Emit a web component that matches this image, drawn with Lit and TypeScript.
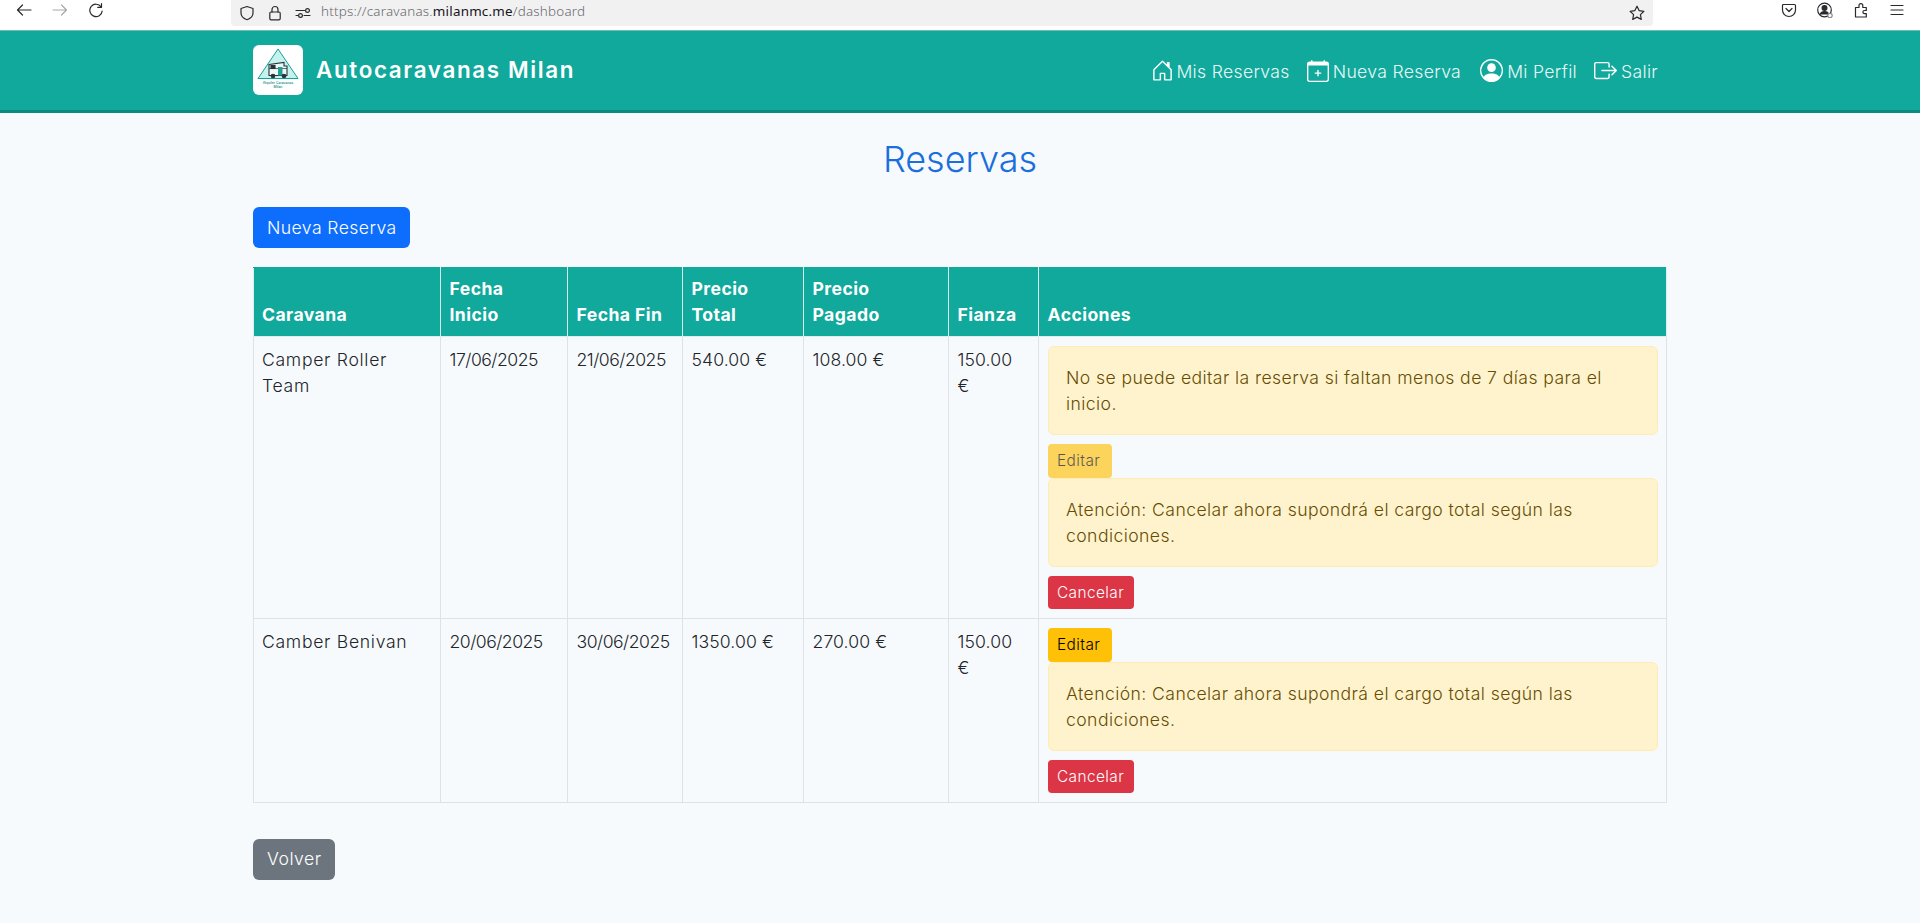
import { LitElement, html, css, svg } from 'lit';
import { customElement } from 'lit/decorators.js';

interface Reserva {
  caravana: string;
  inicio: string;
  fin: string;
  total: string;
  pagado: string;
  fianza: string;
  editable: boolean;
}

const RESERVAS: Reserva[] = [
  { caravana: 'Camper Roller\nTeam', inicio: '17/06/2025', fin: '21/06/2025', total: '540.00 €', pagado: '108.00 €', fianza: '150.00\n€', editable: false },
  { caravana: 'Camber Benivan', inicio: '20/06/2025', fin: '30/06/2025', total: '1350.00 €', pagado: '270.00 €', fianza: '150.00\n€', editable: true },
];

const COLS = [187, 127, 115, 121, 145, 90, 628];
const HEADERS = ['Caravana', 'Fecha\nInicio', 'Fecha Fin', 'Precio\nTotal', 'Precio\nPagado', 'Fianza', 'Acciones'];

const chromeIcon = (d: unknown, w = 16) => html`
  <svg class="ci" width=${w} height=${w} viewBox="0 0 16 16" fill="none" stroke="#2a2a2e" stroke-width="1.2" stroke-linecap="round" stroke-linejoin="round">${d}</svg>
`;

@customElement('app-root')
export class AppRoot extends LitElement {
  static styles = css`
    :host {
      display: block;
      height: 923px;
      overflow: hidden;
      background: #f7fafd;
      font-family: Inter, "Liberation Sans", sans-serif;
      font-size: 17.6px;
      line-height: 26.4px;
      letter-spacing: 0.42px;
      color: #212529;
      font-weight: 350;
    }
    .chrome {
      height: 31px;
      background: #fff;
      border-bottom: 1px solid #6fbdb6;
      box-sizing: border-box;
      display: flex;
      align-items: flex-start;
      letter-spacing: 0;
    }
    .nav-btns {
      width: 231px;
      display: flex;
      gap: 20px;
      padding: 2px 0 0 16px;
      box-sizing: border-box;
    }
    .ci { display: block; }
    .urlbar {
      width: 1422px;
      height: 26px;
      background: #f1f1f1;
      border-radius: 0 0 4px 4px;
      display: flex;
      align-items: center;
      gap: 12px;
      padding: 0 8px;
      box-sizing: border-box;
      font-family: "Noto Sans", sans-serif;
      font-size: 13.4px;
      letter-spacing: 0.22px;
      color: #6a6a70;
    }
    .urlbar b { font-weight: 400; color: #15141a; }
    .url { flex: 1; margin-left: -2px; margin-top: -3px; }
    .right-btns {
      display: flex;
      gap: 20px;
      padding: 2px 0 0 128px;
    }
    header {
      height: 82px;
      background: #10a99c;
      border-bottom: 3px solid #0c8a80;
      box-sizing: border-box;
    }
    .bar {
      width: 1414px;
      margin: 0 auto;
      height: 79px;
      display: flex;
      align-items: center;
    }
    .logo {
      width: 50px;
      height: 50px;
      background: #fff;
      border-radius: 6px;
      flex: none;
      display: block;
      margin-top: -1px;
    }
    .brand {
      margin-left: 13px;
      color: #fff;
      font-size: 22.4px;
      font-weight: 600;
      letter-spacing: 1.65px;
    }
    nav {
      margin-left: auto;
      display: flex;
      gap: 17px;
      margin-right: 9px;
      margin-top: 3px;
      font-weight: 300;
      letter-spacing: 0.33px;
    }
    nav a {
      display: flex;
      align-items: center;
      gap: 4px;
      color: #e9f8f6;
    }
    nav a:first-child { gap: 2px; }
    nav a:nth-child(3) { margin-left: 2px; }
    nav svg { display: block; margin-top: -3px; }
    main {
      width: 1414px;
      margin: 0 auto;
    }
    h1 {
      margin: 0;
      padding-top: 23px;
      height: 71px;
      font-size: 36px;
      line-height: 46px;
      font-weight: 300;
      letter-spacing: 0;
      color: #1a6fdc;
      text-align: center;
    }
    .btn {
      display: block;
      box-sizing: border-box;
      border-radius: 6px;
      height: 41px;
      padding: 7.5px 14px;
      color: #fff;
      font-weight: 300;
      white-space: nowrap;
    }
    .primary { background: #0d6efd; width: 157px; }
    .secondary { background: #6c757d; width: 82px; letter-spacing: 0.5px; padding-top: 7px; }
    .top-action { height: 60px; }
    .bottom { margin-top: 36px; }
    table {
      border-collapse: collapse;
      table-layout: fixed;
      width: 1413px;
    }
    th, td {
      border: 1px solid #dee2e6;
      padding: 10px 8px 8px 8.5px;
      vertical-align: top;
      text-align: left;
      font-weight: 350;
      white-space: pre-line;
    }
    th {
      padding: 8px 8px 7px 8.5px;
      vertical-align: bottom;
      background: #10a99c;
      color: #fff;
      font-weight: 700;
      border-color: #d9f0ee;
      border-top-color: #10a99c;
    }
    th:first-child, td:first-child { padding-left: 8px; }
    td.name { letter-spacing: 0.7px; }
    td.date { letter-spacing: -0.5px; }
    td.money { letter-spacing: 0.1px; }
    td.actions { padding: 9px 8px 9px 9px; white-space: normal; }
    .alert {
      box-sizing: border-box;
      height: 89px;
      padding: 18px 17px 14px;
      background: #fff3cd;
      border: 1px solid #ffecb5;
      border-radius: 6px;
      color: #664d03;
      font-weight: 300;
    }
    .alert.gap { margin-bottom: 9px; }
    .sm {
      box-sizing: border-box;
      padding: 4px 9px;
      border-radius: 4px;
      font-size: 15.4px;
      line-height: 25px;
    }
    .editar { background: #ffc107; color: #000; width: 64px; height: 34px; }
    .editar.off { opacity: 0.65; }
    .cancelar { background: #dc3545; color: #fff; width: 86px; height: 33px; font-weight: 300; margin-top: 9px; }
    .caption {
      font-size: 3.4px;
      font-weight: 500;
      letter-spacing: 0;
      fill: #0c8a80;
    }
  `;

  private logo() {
    return html`
      <svg class="logo" viewBox="0 0 50 50">
        <path d="M25 4 L45 33.500 H5 Z" fill="#c6f2ee" stroke="#12a296" stroke-width="1"></path>
        <g fill="none" stroke="#26343a" stroke-width="1.100">
          <path d="M16 19.500 L31 17.500 V21 H34 V30.500 H16 Z" fill="#eef7f6"></path>
          <path d="M16 23.500 H34" stroke-width="0.700"></path>
          <rect x="18" y="20.500" width="4" height="3" fill="#26343a"></rect>
          <rect x="25" y="22" width="4.500" height="8.500" fill="#1fa193" stroke="none"></rect>
          <circle cx="20" cy="31" r="1.800" fill="#26343a"></circle>
          <circle cx="31" cy="31" r="1.800" fill="#26343a"></circle>
        </g>
        <text class="caption" x="25" y="39" text-anchor="middle">Alquiler Caravanas</text>
        <text class="caption" x="25" y="43" text-anchor="middle">Milan</text>
      </svg>
    `;
  }

  private chrome() {
    return html`
      <div class="chrome">
        <div class="nav-btns">
          ${chromeIcon(svg`<path d="M15 8H1.500M6.500 3L1.500 8l5 5"></path>`)}
          <svg class="ci" width="16" height="16" viewBox="0 0 16 16" fill="none" stroke="#a8a8ac" stroke-width="1.200" stroke-linecap="round" stroke-linejoin="round"><path d="M1 8h13.500M9.500 3l5 5-5 5"></path></svg>
          ${chromeIcon(svg`<path d="M13.500 1.500v3.800H9.700M13.200 5A6.200 6.200 0 1 0 14.200 9"></path>`)}
        </div>
        <div class="urlbar">
          ${chromeIcon(svg`<path d="M8 1.500l6 2V8c0 3.400-2.600 5.600-6 6.700C4.600 13.600 2 11.400 2 8V3.500z"></path>`)}
          ${chromeIcon(svg`<rect x="2.800" y="7" width="10.400" height="7.800" rx="1.300"></rect><path d="M5 7V4.500a3 3 0 0 1 6 0V7"></path>`)}
          ${chromeIcon(svg`<path d="M1 5.500h8.500M1 10.500h2.500M9 10.500h6"></path><circle cx="12.500" cy="5.500" r="1.900"></circle><circle cx="5.500" cy="10.500" r="1.900"></circle>`)}
          <span class="url">https://caravanas.<b>milanmc.me</b>/dashboard</span>
          ${chromeIcon(svg`<path d="M8 1.200l2.100 4.400 4.800.7-3.500 3.300.9 4.800L8 12.100l-4.300 2.300.9-4.800L1.100 6.300l4.800-.7z"></path>`)}
        </div>
        <div class="right-btns">
          ${chromeIcon(svg`<path d="M2.500 2.500h11a1 1 0 0 1 1 1V8a6.500 6.500 0 0 1-13 0V3.500a1 1 0 0 1 1-1z"></path><path d="M5 6.500l3 3 3-3"></path>`)}
          <svg class="ci" width="16" height="16" viewBox="0 0 16 16" fill="none" stroke="#2a2a2e" stroke-width="1.200">
            <circle cx="7.500" cy="8" r="6.800"></circle>
            <circle cx="7.500" cy="6" r="2.400" fill="#2a2a2e"></circle>
            <path d="M3 12.500c.8-2.200 2.600-3 4.500-3s3.700.8 4.500 3" fill="#2a2a2e"></path>
            <circle cx="13" cy="13.500" r="2.200" fill="#fff" stroke="#8a8a8e"></circle>
          </svg>
          ${chromeIcon(svg`<path d="M2.500 15V5.500h3.500V3.500a1.900 1.900 0 0 1 3.800 0V5.500h3.500v3H11.500a1.600 1.600 0 0 0 0 3.200h1.800V15z"></path>`)}
          ${chromeIcon(svg`<path d="M2 3.500h12M2 8h12M2 12.500h12"></path>`)}
        </div>
      </div>
    `;
  }

  private navbar() {
    return html`
      <header>
        <div class="bar">
          ${this.logo()}
          <span class="brand">Autocaravanas Milan</span>
          <nav>
            <a>
              <svg width="23" height="23" viewBox="0 0 16 16" fill="#fff"><path d="M8.354 1.146a.5.5 0 0 0-.708 0l-6 6A.5.5 0 0 0 1.500 7.500v7a.5.5 0 0 0 .5.5h4.500a.5.5 0 0 0 .5-.5v-4h2v4a.5.5 0 0 0 .5.5H14a.5.5 0 0 0 .5-.5v-7a.5.5 0 0 0-.146-.354L13 5.793V2.500a.5.5 0 0 0-.5-.5h-1a.5.5 0 0 0-.5.5v1.293L8.354 1.146zM2.500 14V7.707l5.500-5.500 5.500 5.500V14H10v-4a.5.5 0 0 0-.5-.5h-3a.5.5 0 0 0-.5.5v4H2.500z"></path></svg>
              Mis Reservas
            </a>
            <a>
              <svg width="22" height="22" viewBox="0 0 16 16" fill="#fff"><path d="M8 7a.5.5 0 0 1 .5.500V9H10a.5.5 0 0 1 0 1H8.500v1.500a.5.5 0 0 1-1 0V10H6a.5.5 0 0 1 0-1h1.500V7.500A.5.5 0 0 1 8 7z"></path><path d="M3.500 0a.5.5 0 0 1 .5.500V1h8V.500a.5.5 0 0 1 1 0V1h1a2 2 0 0 1 2 2v11a2 2 0 0 1-2 2H2a2 2 0 0 1-2-2V3a2 2 0 0 1 2-2h1V.500a.5.5 0 0 1 .5-.5zM1 4v10a1 1 0 0 0 1 1h12a1 1 0 0 0 1-1V4H1z"></path></svg>
              Nueva Reserva
            </a>
            <a>
              <svg width="23" height="23" viewBox="0 0 16 16" fill="#fff"><path d="M11 6a3 3 0 1 1-6 0 3 3 0 0 1 6 0z"></path><path fill-rule="evenodd" d="M0 8a8 8 0 1 1 16 0A8 8 0 0 1 0 8zm8-7a7 7 0 0 0-5.468 11.370C3.242 11.226 4.805 10 8 10s4.757 1.225 5.468 2.370A7 7 0 0 0 8 1z"></path></svg>
              Mi Perfil
            </a>
            <a>
              <svg width="23" height="23" viewBox="0 0 16 16" fill="#fff"><path fill-rule="evenodd" d="M10 12.500a.5.5 0 0 1-.5.500h-8a.5.5 0 0 1-.5-.5v-9a.5.5 0 0 1 .5-.5h8a.5.5 0 0 1 .5.500v2a.5.5 0 0 0 1 0v-2A1.500 1.500 0 0 0 9.500 2h-8A1.500 1.500 0 0 0 0 3.500v9A1.500 1.500 0 0 0 1.500 14h8a1.500 1.500 0 0 0 1.500-1.500v-2a.5.5 0 0 0-1 0v2z"></path><path fill-rule="evenodd" d="M15.854 8.354a.5.5 0 0 0 0-.708l-3-3a.5.5 0 0 0-.708.708L14.293 7.500H5.500a.5.5 0 0 0 0 1h8.793l-2.147 2.146a.5.5 0 0 0 .708.708l3-3z"></path></svg>
              Salir
            </a>
          </nav>
        </div>
      </header>
    `;
  }

  private rowActions(r: Reserva) {
    return html`
      ${r.editable
        ? ''
        : html`<div class="alert gap">No se puede editar la reserva si faltan menos de 7 días para el inicio.</div>`}
      <div class="sm editar ${r.editable ? '' : 'off'}">Editar</div>
      <div class="alert">Atención: Cancelar ahora supondrá el cargo total según las condiciones.</div>
      <div class="sm cancelar">Cancelar</div>
    `;
  }

  render() {
    return html`
      ${this.chrome()}
      ${this.navbar()}
      <main>
        <h1>Reservas</h1>
        <div class="top-action"><span class="btn primary">Nueva Reserva</span></div>
        <table>
          <colgroup>${COLS.map((w) => html`<col style="width:${w}px" />`)}</colgroup>
          <thead>
            <tr>${HEADERS.map((h) => html`<th>${h}</th>`)}</tr>
          </thead>
          <tbody>
            ${RESERVAS.map(
              (r) => html`
                <tr>
                  <td class="name">${r.caravana}</td>
                  <td class="date">${r.inicio}</td>
                  <td class="date">${r.fin}</td>
                  <td class="money">${r.total}</td>
                  <td class="money">${r.pagado}</td>
                  <td class="money">${r.fianza}</td>
                  <td class="actions">${this.rowActions(r)}</td>
                </tr>
              `,
            )}
          </tbody>
        </table>
        <div class="bottom"><span class="btn secondary">Volver</span></div>
      </main>
    `;
  }
}
